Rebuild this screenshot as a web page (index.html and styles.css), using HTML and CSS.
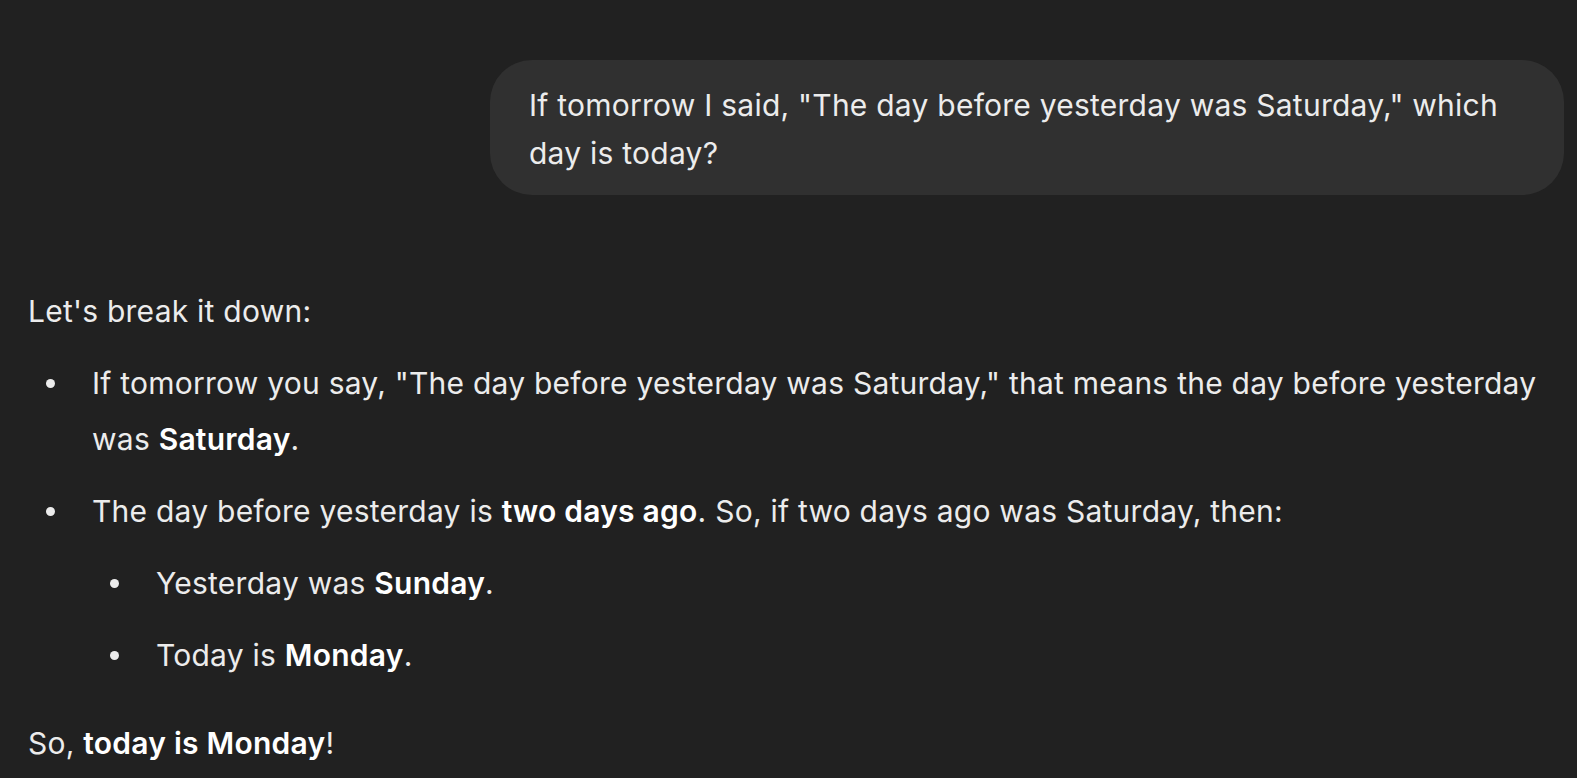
FILE: index.html
```html
<!DOCTYPE html>
<html lang="en">
<head>
<meta charset="utf-8">
<title>Chat</title>
<link rel="stylesheet" href="styles.css">
</head>
<body>
<main class="thread">
  <div class="user-row">
    <div class="bubble">If tomorrow I said, "The day before yesterday was Saturday," which day is today?</div>
  </div>
  <div class="answer">
    <p>Let's break it down:</p>
    <ul class="list">
      <li>If tomorrow you say, "The day before yesterday was Saturday," that means the day before yesterday was <strong>Saturday</strong>.</li>
      <li>The day before yesterday is <strong>two days ago</strong>. So, if two days ago was Saturday, then:
        <ul class="list sub">
          <li>Yesterday was <strong>Sunday</strong>.</li>
          <li>Today is <strong>Monday</strong>.</li>
        </ul>
      </li>
    </ul>
    <p>So, <strong>today is Monday</strong>!</p>
  </div>
</main>
</body>
</html>
```

FILE: styles.css
```css
html, body {
  margin: 0;
  padding: 0;
  background: #212121;
}
body {
  font-family: Inter, "Noto Sans", sans-serif;
  color: #ececec;
  font-size: 30px;
  letter-spacing: 0.24px;
}
.thread {
  padding: 60px 13px 0 28px;
}
.user-row {
  display: flex;
  justify-content: flex-end;
}
.bubble {
  width: 996px;
  background: #303030;
  border-radius: 42px;
  padding: 21px 39px 18px 39px;
  line-height: 48px;
}
.answer {
  margin-top: 88px;
  line-height: 56px;
}
.answer p {
  margin: 0;
}
.list {
  list-style: none;
  margin: 16px 0 32px 0;
  padding: 0 0 0 64px;
}
.list li {
  position: relative;
  margin: 0 0 16px 0;
}
.list li::before {
  content: "";
  position: absolute;
  left: -46px;
  top: 24px;
  width: 9px;
  height: 9px;
  border-radius: 50%;
  background: #ececec;
}
.list li:last-child {
  margin-bottom: 0;
}
.list.sub {
  margin: 16px 0 0 0;
}
strong {
  font-weight: 600;
  color: #ffffff;
}
```
